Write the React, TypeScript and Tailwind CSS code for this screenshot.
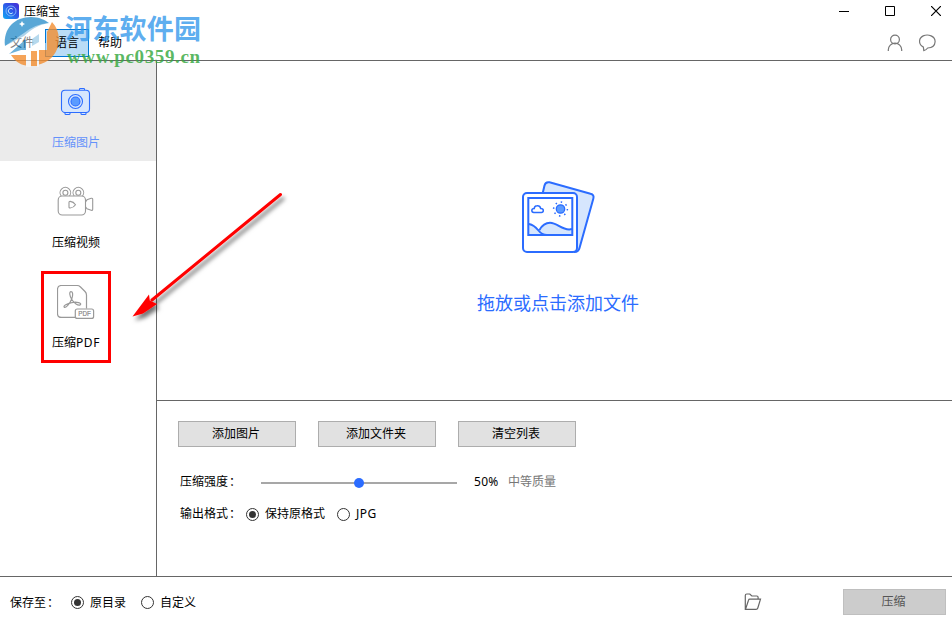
import type { ReactNode } from 'react';

function Camera() {
  return (
    <svg width="32" height="32" viewBox="0 0 32 32" fill="#d6e6fd" stroke="#2b6cff" strokeWidth="1.1">
      <path d="M19.500 5V4q0-.5 1-.5h3q1 0 1 .5v1M5 27v1.700q0 .8 1 .8h3q1 0 1-.8V27M21 27v1.700q0 .8 1 .8h3q1 0 1-.8V27" />
      <rect x="1.500" y="5.300" width="28" height="22.200" rx="3.500" />
      <circle cx="15.500" cy="16.500" r="7" />
      <circle cx="15.500" cy="16.500" r="4.500" fill="#5b9bff" />
    </svg>
  );
}

function Video() {
  return (
    <svg width="38" height="32" viewBox="0 0 38 32" fill="none" stroke="#999" strokeWidth="1.1">
      <path d="M4.200 11A5.300 5.300 0 1 1 12.500 11M17.200 11A5.300 5.300 0 1 1 25.500 11" />
      <circle cx="8.400" cy="7.800" r="2.500" />
      <circle cx="21.300" cy="7.800" r="2.500" />
      <rect x="1.200" y="11" width="27.300" height="19" rx="4" />
      <path d="M28.500 16.800l1.500-2 4.200-1.500q1.500-.4 1.500 1v10q0 1.400-1.500 1l-4.200-1.500-1.500-2M12 17.500q0-1.200 1.200-1.100 3.400.4 5.300 3.300-1.900 2.900-5.300 3.300-1.200.1-1.200-1.100z" />
    </svg>
  );
}

function Pdf() {
  return (
    <svg width="38" height="36" viewBox="0.5 3 38 36" fill="none" stroke="#999" strokeWidth="1.2">
      <path d="M18.500 34.400H5q-4 0-4-4V6.500q0-4 4-4H20.500q2 0 3.500 1.500l4.500 4.500q1.500 1.500 1.500 3.500V25.500" className="translate-y-[1px]" />
      <path d="M14.700 9.700c-2.300-.2-1.600 4.300.6 7.800 2.200 3.600 6.200 6.500 8.400 5.400 2.300-1.900-3.900-3.500-8.600-2.200-4.400 1-8.700 3.200-7.400 4.500 2 1.400 6.100-4.500 7.600-8.400 1.300-3.700 1.200-7-.6-7.100z" />
      <rect x="18.800" y="27" width="18.300" height="9.400" rx="2" fill="white" />
      <text x="21.800" y="34.200" fontSize="7" fontFamily="Liberation Sans, sans-serif" fill="#888" stroke="#888" strokeWidth=".2" textLength="12.500" lengthAdjust="spacingAndGlyphs">PDF</text>
    </svg>
  );
}

function Photos() {
  return (
    <svg width="76" height="76" viewBox="0 0 76 76" fill="none" stroke="#2b6cff" strokeWidth="2" className="block">
      <path d="M21.500 14l2-8.500Q24.500 1.500 28.500 2.300l41 11.500q4 1 2.800 5L58.500 68q-1 4-5 4z" fill="#d6e6fd" />
      <rect x="2" y="13" width="54" height="59" rx="4" fill="white" />
      <path d="M7 43.500q4 .5 7.500 4l4.500 2.500Q23 42.600 29 42.600c8 0 13 9 22.500 6.500V55H7z" fill="#d6e6fd" stroke="none" />
      <rect x="7.300" y="18" width="44" height="37" />
      <path d="M8 44q5 1 9 6t9 5M18.500 50q4-7.200 10.500-7.200c8 0 13 9 22 6.200" />
      <path d="M12.800 32.500h7.500q2-.1 2-2t-2.600-2q-.7-3-3.700-2.700-2.600.2-2.800 2.800-2.300.1-2.400 2 0 1.800 2 1.900z" strokeWidth="1.500" />
      <circle cx="39.500" cy="29" r="4.200" fill="#5b9bff" strokeWidth="1.300" />
      <circle cx="39.500" cy="29" r="6.900" strokeWidth="1.500" strokeDasharray="1.500 3.919" />
    </svg>
  );
}

function Nav({ icon, label, active }: { icon: ReactNode; label: ReactNode; active?: boolean }) {
  return (
    <div className={`h-[100px] pt-6 pl-[41px] ${active ? 'bg-[#ebebeb] text-[#6492fb]' : 'text-black'}`}>
      <div className="flex w-[70px] flex-col items-center">
        <div className="flex h-12 items-start">{icon}</div>
        <span className="leading-[20px] whitespace-nowrap">{label}</span>
      </div>
    </div>
  );
}

function Radio({ label, checked }: { label: string; checked?: boolean }) {
  return (
    <label className="flex items-center gap-1.5">
      <span className="flex size-[13px] items-center justify-center rounded-full border border-[#333] bg-white">
        {checked && <span className="size-[7px] rounded-full bg-[#333]" />}
      </span>
      {label}
    </label>
  );
}

function Watermark() {
  return (
    <svg className="pointer-events-none absolute top-0 left-0" width="210" height="72" viewBox="0 0 210 72">
      <path d="M5 46C3 28 15 17 31 17c8 0 14 3 18 6-12 2-18 7-25 13z" fill="#2f91cc" fillOpacity=".8" />
      <path d="M9 54l17-15v11h-5zM32 39l7-5v8l-7 4z" fill="#2f91cc" fillOpacity=".7" />
      <path d="M52 22c9 9 9 25 1 34-4 5-9 7-14 8.500V50h8V32z" fill="#f38d30" fillOpacity=".8" />
      <path d="M11 55h15v10.500C19 64.500 14 60 11 55zM31 51h6v15h-6z" fill="#f38d30" fillOpacity=".8" />
      <path d="M5 46l19-13Q35 24 49 23l-9 5v15h6v7h-7v17h-2V50h-6v17h-5V39L9 53z" fill="white" fillOpacity=".5" />
      <path d="M22 21l1 2 2 1-2 1-1 2-1-2-2-1 2-1z" fill="white" />
      <text x="65" y="39" fontSize="27" fontWeight="700" fontFamily="Noto Sans CJK SC, sans-serif" fill="#3398eb" fillOpacity=".8" textLength="136">河东软件园</text>
      <text x="67" y="63" fontSize="19" fontWeight="700" fontFamily="Liberation Serif, serif" fill="#36a83f" fillOpacity=".82" textLength="133">www.pc0359.cn</text>
    </svg>
  );
}

export default function App() {
  return (
    <div lang="zh-CN" className="relative flex h-[624px] w-[952px] flex-col overflow-hidden bg-white font-['Noto_Sans','Noto_Sans_CJK_SC',sans-serif] text-[12px] leading-[18px] text-black">
      <header className="flex h-[61px] justify-between border-b border-[#666]">
        <div>
          <div className="flex h-[29px] items-start gap-[5px] pt-[3px] pl-[3px]">
            <svg width="16" height="16" viewBox="0 0 16 16">
              <defs>
                <linearGradient id="brand" x1="0" y1="1" x2="1" y2="0"><stop stopColor="#10a9f5" /><stop offset=".55" stopColor="#3157e8" /><stop offset="1" stopColor="#452bd3" /></linearGradient>
              </defs>
              <rect width="16" height="16" rx="3" fill="url(#brand)" />
              <circle cx="8" cy="8" r="5" fill="none" stroke="#8ac9ff" strokeWidth=".8" />
              <path d="M9.800 6.200a2.600 2.600 0 1 0 0 3.600" fill="none" stroke="#c1e5ff" />
            </svg>
            <span>压缩宝</span>
          </div>
          <nav className="flex h-7 items-center">
            <span className="w-[45px] pl-2.5">文件</span>
            <span className="flex h-7 w-11 items-center justify-center border border-[#0078d7] bg-[#b9dcf6]">语言</span>
            <span className="pl-[9px]">帮助</span>
          </nav>
        </div>
        <div className="flex flex-col items-end">
          <div className="flex gap-[36px] pt-[6px] pr-[11px]">
            <svg width="10" height="10" stroke="black"><path d="M0 5.500h10" /></svg>
            <svg width="10" height="10" fill="none" stroke="black"><path d="M.5.500h9v9h-9z" /></svg>
            <svg width="10" height="10" stroke="black" strokeWidth="1.200"><path d="M0 0l10 10M10 0L0 10" /></svg>
          </div>
          <div className="flex gap-4 pt-[18px] pr-4">
            <svg width="16" height="18" viewBox="0 0 16 18" fill="none" stroke="#777" strokeWidth="1.200"><circle cx="8" cy="5.500" r="4.400" /><path d="M1.300 17v-1.200a6.700 6.700 0 0 1 13.400 0V17" /></svg>
            <svg width="17" height="18" viewBox="0 0 17 18" fill="none" stroke="#777" strokeWidth="1.200"><path d="M4.800 16.600l-.4-3.500C-1 10.300-.4 4.200 4.200 1.900c5-2.300 12.100.3 11.900 5.800-.2 4.300-3.700 6.100-7.400 6.300-1.200 1.500-2.300 2.500-3.900 2.600z" /></svg>
          </div>
        </div>
      </header>
      <main className="flex h-[516px] border-b border-[#666]">
        <aside className="w-[157px] border-r border-[#666]">
          <Nav icon={<Camera />} label="压缩图片" active />
          <Nav icon={<Video />} label="压缩视频" />
          <Nav icon={<Pdf />} label={<>压缩<span className="tracking-[.6px]">PDF</span></>} />
        </aside>
        <section className="flex-1">
          <div className="flex h-[340px] flex-col items-center border-b border-[#666] pt-[119px]">
            <div className="pl-[8px]"><Photos /></div>
            <span className="mt-[33px] pl-[7px] text-[18px] leading-[28px] text-[#2b6cff]">拖放或点击添加文件</span>
          </div>
          <div className="pt-5 pl-[21px]">
            <div className="flex gap-[22px]">
              {['添加图片', '添加文件夹', '清空列表'].map((label) => (
                <button key={label} className="h-[26px] w-[118px] border border-[#adadad] bg-[#e1e1e1] pr-0.5">{label}</button>
              ))}
            </div>
            <div className="mt-[26px] flex h-[18px] items-center pl-0.5">
              <span className="w-[81px]">压缩强度<span className="ml-px">：</span></span>
              <div className="mt-[2px] flex h-0.5 w-[196px] items-center justify-center bg-[#a7a7a7]">
                <span className="size-2.5 shrink-0 rounded-full bg-[#2b6cff]" />
              </div>
              <span className="ml-[17px] w-[34px] tracking-[.3px]">50%</span>
              <span className="text-[#777]">中等质量</span>
            </div>
            <div className="mt-[14px] flex h-[18px] items-center pl-0.5">
              <span className="w-[66px]">输出格式<span className="ml-px">：</span></span>
              <div className="flex gap-3 tracking-[.01px]"><Radio label="保持原格式" checked /><div className="tracking-[.5px]"><Radio label="JPG" /></div></div>
            </div>
          </div>
        </section>
      </main>
      <footer className="flex h-[47px] items-center pt-1 pr-1.5 pl-2.5">
        <span className="w-[61px]">保存至<span className="ml-px">：</span></span>
        <div className="flex gap-[15px]"><Radio label="原目录" checked /><Radio label="自定义" /></div>
        <svg className="mb-px ml-auto" width="18" height="18" viewBox="0 0 18 18" fill="none" stroke="#666" strokeWidth="1.200"><path d="M2 16.400H1.300V2.500q0-1.500 1.500-1.500h3l2 2h5q1.300 0 1.300 1.300v1.900M1.500 16.400L4.500 7.200q.3-1 1.300-1h10.700L13.800 15q-.4 1.400-1.700 1.400H1.500" /></svg>
        <button className="mb-0.5 ml-[81px] h-[26px] w-[103px] border border-[#bfbfbf] bg-[#ccc] pr-0.5 text-[#555]">压缩</button>
      </footer>
      <div className="absolute top-[271px] left-[41px] h-[92px] w-[70px] border-3 border-[#f00]" />
      <svg className="pointer-events-none absolute top-[185px] left-[125px]" width="170" height="145" viewBox="125 185 170 145">
        <defs><filter id="shade" x="-20%" y="-20%" width="140%" height="140%"><feDropShadow dx="2.500" dy="4" stdDeviation="2" floodOpacity=".55" /></filter></defs>
        <g filter="url(#shade)" fill="#f00">
          <path d="M280.500 194.500L152 300" stroke="#f00" strokeWidth="3" strokeLinecap="round" />
          <path d="M132.500 316.500L149 294.500l.8 6 7.200 3.500L143 313.500z" />
        </g>
      </svg>
      <Watermark />
    </div>
  );
}
